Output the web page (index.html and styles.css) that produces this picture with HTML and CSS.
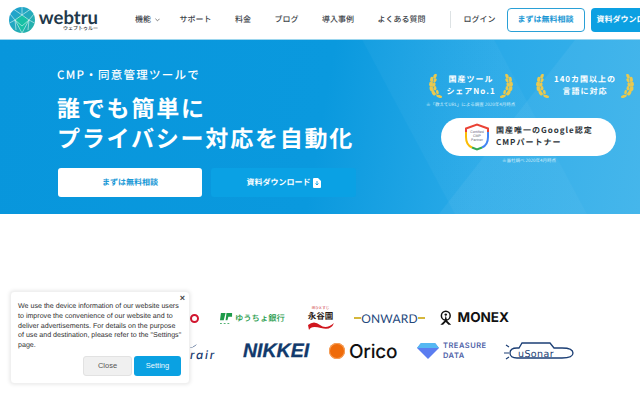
FILE: index.html
```html
<!DOCTYPE html>
<html lang="ja">
<head>
<meta charset="utf-8">
<title>webtru</title>
<link rel="stylesheet" href="styles.css">
</head>
<body>
<header class="site-header">
  <a class="brand">
    <svg class="brand-mark" viewBox="0 0 26 26">
      <defs><linearGradient id="gl" x1="0" y1="0" x2="1" y2="1"><stop offset="0" stop-color="#1f9fd6"/><stop offset="1" stop-color="#27b5a3"/></linearGradient></defs>
      <circle cx="13" cy="13" r="13" fill="url(#gl)"/>
      <path d="M13 26 6 13 13 8 20 13Z" fill="#18c0a5"/>
      <path d="M6 13 13 8 20 13 13 26 6 13ZM13 8V0M6 13 1 7M20 13 25 7M6 13 .5 16M20 13 25.500 16M13 8 5 2.500M13 8 21 2.500M6 13 13 19 20 13M6 13 7 23M20 13 19 23" fill="none" stroke="#dff6f6" stroke-width=".6"/>
    </svg>
    <span class="brand-text">
      <span class="brand-name">webtru</span>
      <span class="brand-sub">ウェブトゥルー</span>
    </span>
  </a>
  <nav class="nav">
    <a class="nav-item nav-drop">機能<svg class="chev" viewBox="0 0 6 4"><path d="M.5.5 3 3 5.500.5" fill="none" stroke="#555" stroke-width=".9"/></svg></a>
    <a class="nav-item">サポート</a>
    <a class="nav-item">料金</a>
    <a class="nav-item">ブログ</a>
    <a class="nav-item">導入事例</a>
    <a class="nav-item">よくある質問</a>
  </nav>
  <span class="nav-divider"></span>
  <a class="nav-item login">ログイン</a>
  <a class="head-btn head-outline">まずは無料相談</a>
  <a class="head-btn head-fill">資料ダウンロード</a>
</header>

<section class="hero">
  <div class="hero-left">
    <p class="hero-lead">CMP・同意管理ツールで</p>
    <h1 class="hero-title">誰でも簡単に<br>プライバシー対応を自動化</h1>
    <div class="hero-actions">
      <a class="cta cta-white">まずは無料相談</a>
      <a class="cta cta-blue">資料ダウンロード<svg class="doc" viewBox="0 0 8 10"><path d="M0 1Q0 0 1 0H5L8 3V9Q8 10 7 10H1Q0 10 0 9Z" fill="#fff"/><path d="M4 3V7M2.500 5.500 4 7 5.500 5.500" fill="none" stroke="#0a9fe2" stroke-width=".9"/></svg></a>
    </div>
  </div>
  <div class="hero-right">
    <div class="awards">
      <div class="award">
        <svg class="laurel" viewBox="0 0 16 26"><use href="#laurel-shape"/></svg>
        <span class="award-text">国産ツール<br>シェアNo.1</span>
        <svg class="laurel flip" viewBox="0 0 16 26"><use href="#laurel-shape"/></svg>
      </div>
      <div class="award">
        <svg class="laurel" viewBox="0 0 16 26"><use href="#laurel-shape"/></svg>
        <span class="award-text">140カ国以上の<br>言語に対応</span>
        <svg class="laurel flip" viewBox="0 0 16 26"><use href="#laurel-shape"/></svg>
      </div>
    </div>
    <p class="note note-one">※「教えてURL」による調査 2020年4月時点</p>
    <div class="partner">
      <svg class="shield" viewBox="0 0 26 28">
        <path d="M13 1.500 24 5.500V14Q24 22 13 26.500Q2 22 2 14V5.500Z" fill="#fff"/>
        <path d="M24 9V14Q24 22 18 24.500" fill="none" stroke="#4285f4" stroke-width="2"/>
        <path d="M18 24.500 13 26.500 8 24.500" fill="none" stroke="#34a853" stroke-width="2"/>
        <path d="M8 24.500Q2 22 2 14V9" fill="none" stroke="#fbbc05" stroke-width="2"/>
        <path d="M2 9V5.500L13 1.500 24 5.500V9" fill="none" stroke="#ea4335" stroke-width="2"/>
        <text class="shield-text" x="13" y="10">Certified</text>
        <text class="shield-text" x="13" y="14">CMP</text>
        <text class="shield-text" x="13" y="18">Partner</text>
      </svg>
      <span class="partner-text">国産唯一のGoogle認定<br>CMPパートナー</span>
    </div>
    <p class="note">※当社調べ 2020年4月時点</p>
  </div>
</section>

<section class="logos">
  <div class="logo-row row-a">
    <div class="logo logo-red"><span class="red-ring"></span></div>
    <div class="logo logo-post">
      <svg class="jp" viewBox="0 0 14 14"><path d="M1 1H6L4 9H0ZM7 1H13V5H9L8 9H6Z" fill="#1d9a48"/><path d="M0 12H2V13H0ZM4 12H6V13H4ZM8 12H10V13H8Z" fill="#1d9a48"/></svg>
      <span>ゆうちょ銀行</span>
    </div>
    <div class="logo logo-eikoku">
      <span class="eik-top">味ひとすじ</span>
      <span class="eik-name">永谷園</span>
      <svg class="eik-wave" viewBox="0 0 26 8"><path d="M0 3Q6 -2 12 3T26 1Q23 9 13 6T1 8Z" fill="#d0161e"/></svg>
    </div>
    <div class="logo logo-onward"><i class="dash"></i><span>ONWARD</span><i class="dash"></i></div>
    <div class="logo logo-monex">
      <svg class="monex-mark" viewBox="0 0 20 22"><circle cx="10" cy="7.500" r="6.500" fill="none" stroke="#111" stroke-width="2.200"/><circle cx="10" cy="6" r="1.800" fill="#111"/><path d="M10 7 8 15 2 21H6L10 17 14 21H18L12 15Z" fill="#111"/></svg>
      <span>MONEX</span>
    </div>
  </div>
  <div class="logo-row row-b">
    <div class="logo logo-air">
      <svg class="swoosh" viewBox="0 0 8 4"><path d="M0 4Q4 3.500 8 0 5 4 0 4Z" fill="#17386e"/></svg>
      <span>rair</span>
    </div>
    <div class="logo logo-nikkei">NIKKEI</div>
    <div class="logo logo-orico"><span class="orico-dot"></span><span>Orico</span></div>
    <div class="logo logo-treasure">
      <svg class="gem" viewBox="0 0 22 16"><path d="M4 0H18L22 5 11 16 0 5Z" fill="#5b7df0"/><path d="M4 0H18L22 5H0Z" fill="#55b8f2"/></svg>
      <span>TREASURE<br>DATA</span>
    </div>
    <div class="logo logo-usonar">
      <svg class="sonar" viewBox="0 0 70 18">
        <path d="M5 5 2 3M5 11H0M5 15 2 17" stroke="#1c3f75" stroke-width="1.200" fill="none"/>
        <path d="M6 11Q6 6 13 6H15L18 1H46L50 6H58Q69 6 69 11T58 16H13Q6 16 6 11Z" fill="#fff" stroke="#1c3f75" stroke-width="1.300"/>
        <text class="sonar-text" x="14" y="14.500">uSonar</text>
      </svg>
    </div>
  </div>
</section>

<aside class="cookie">
  <button class="cookie-x">×</button>
  <p class="cookie-text">We use the device information of our website users to improve the convenience of our website and to deliver advertisements. For details on the purpose of use and destination, please refer to the "Settings" page.</p>
  <div class="cookie-actions">
    <button class="ck-btn ck-close">Close</button>
    <button class="ck-btn ck-set">Setting</button>
  </div>
</aside>

<svg class="defs" width="0" height="0">
  <symbol id="laurel-shape" viewBox="0 0 16 26">
    <path d="M13 25Q3 21 5 8" fill="none" stroke="#e9c94f" stroke-width="1"/>
    <g fill="#e9c94f">
      <ellipse cx="7.500" cy="2.500" rx="1.700" ry="2.800" transform="rotate(25 7.500 2.500)"/>
      <ellipse cx="4" cy="6" rx="1.800" ry="2.800" transform="rotate(10 4 6)"/>
      <ellipse cx="7.500" cy="7" rx="1.500" ry="2.400" transform="rotate(30 7.500 7)"/>
      <ellipse cx="3" cy="11" rx="1.800" ry="2.800"/>
      <ellipse cx="6.500" cy="11.500" rx="1.500" ry="2.400" transform="rotate(15 6.500 11.500)"/>
      <ellipse cx="3.500" cy="16" rx="1.800" ry="2.800" transform="rotate(-15 3.500 16)"/>
      <ellipse cx="7.500" cy="15.500" rx="1.500" ry="2.400"/>
      <ellipse cx="6" cy="20.500" rx="1.800" ry="2.900" transform="rotate(-35 6 20.500)"/>
      <ellipse cx="10" cy="19.500" rx="1.400" ry="2.400" transform="rotate(-15 10 19.500)"/>
      <ellipse cx="12" cy="24" rx="3.200" ry="1.500" transform="rotate(15 12 24)"/>
    </g>
  </symbol>
</svg>
</body>
</html>
```
FILE: styles.css
```css
* { box-sizing: border-box; }
html, body { margin: 0; padding: 0; }
body {
  position: relative;
  width: 640px;
  height: 400px;
  overflow: hidden;
  background: #fff;
  font-family: "Noto Sans CJK JP", "Noto Sans", sans-serif;
  color: #3b4248;
  text-rendering: geometricPrecision;
}
p, h1 { margin: 0; }

/* header */
.site-header {
  display: flex;
  align-items: center;
  height: 40px;
  padding-left: 9px;
  background: #fff;
  border-bottom: 1px solid #9cd6ee;
  white-space: nowrap;
  overflow: hidden;
}
.brand { display: flex; align-items: center; gap: 3px; width: 126px; flex: none; }
.brand-mark { width: 26px; height: 26px; flex: none; }
.brand-text { display: flex; flex-direction: column; align-items: flex-end; width: 60px; }
.brand-name {
  font-family: Lato, sans-serif;
  font-weight: 700;
  font-size: 18.500px;
  line-height: 18px;
  color: #22384a;
}
.brand-sub { font-size: 5px; line-height: 6px; font-weight: 500; color: #333; }
.nav { display: flex; align-items: center; gap: 23.500px; flex: none; }
.nav-item { font-size: 8px; font-weight: 500; color: #3d444a; }
.nav-drop { display: flex; align-items: center; gap: 4px; margin-right: -4px; }
.chev { width: 5px; height: 4px; }
.nav-divider { width: 1px; height: 17px; background: #dde2e4; margin: 0 13px 0 24px; flex: none; }
.login { margin-right: 11px; flex: none; }
.head-btn {
  display: flex;
  align-items: center;
  justify-content: center;
  height: 24px;
  border-radius: 4px;
  font-size: 8px;
  font-weight: 700;
  flex: none;
}
.head-outline { width: 78px; border: 1px solid #2aa0d6; color: #1a97d4; background: #fff; margin-right: 6px; }
.head-fill { width: 50px; background: #0ca0e2; color: #fff; justify-content: flex-start; padding-left: 6px; overflow: hidden; border-radius: 4px 0 0 4px; }

/* hero */
.hero {
  display: flex;
  height: 174px;
  padding-left: 57px;
  color: #fff;
  background:
    linear-gradient(128deg, rgba(255,255,255,0) 74%, rgba(255,255,255,.05) 74.200%),
    linear-gradient(62deg, rgba(255,255,255,0) 62%, rgba(255,255,255,.03) 62.200%, rgba(255,255,255,.03) 80%, rgba(255,255,255,0) 80.200%),
    linear-gradient(100deg, #0896dc 0%, #0a99de 50%, #2aaae8 75%, #3bb2ea 100%);
}
.hero-left { width: 361px; flex: none; padding-top: 27px; }
.hero-lead { font-size: 11.500px; line-height: 16px; font-weight: 500; letter-spacing: 1.250px; white-space: nowrap; }
.hero-title { margin-top: 9px; font-size: 23px; line-height: 30px; font-weight: 700; letter-spacing: 1.800px; white-space: nowrap; }
.hero-actions { display: flex; gap: 9px; margin-top: 16px; margin-left: 1px; }
.cta {
  display: flex;
  align-items: center;
  justify-content: center;
  width: 144px;
  height: 29px;
  border-radius: 3px;
  font-size: 8px;
  font-weight: 700;
}
.cta-white { background: #fff; color: #1898d6; }
.cta-blue { width: 145px; background: #0aa1e4; color: #fff; gap: 2px; }
.doc { width: 8px; height: 10px; }

.hero-right { display: flex; flex-direction: column; align-items: flex-start; width: 222px; flex: none; padding-top: 33px; }
.awards { display: flex; gap: 21px; margin-left: 10px; }
.award { display: flex; align-items: center; justify-content: space-between; width: 86px; }
.award + .award { width: 100px; }
.laurel { width: 15px; height: 26px; flex: none; }
.flip { transform: scaleX(-1); }
.award-text {
  font-size: 8px;
  line-height: 12px;
  font-weight: 700;
  letter-spacing: 1px;
  text-align: center;
  white-space: nowrap;
}
.note { font-size: 4.500px; line-height: 6px; color: #d8f0fb; width: 222px; text-align: center; white-space: nowrap; }
.note-one { margin: 3px 0 10px 8px; width: auto; }
.partner {
  display: flex;
  align-items: center;
  gap: 6px;
  width: 175px;
  height: 38px;
  margin-left: 23px;
  padding-left: 23px;
  background: #fff;
  border-radius: 19px;
  margin-bottom: 2px;
}
.shield { width: 26px; height: 28px; flex: none; }
.shield-text { font-size: 3.600px; fill: #667; text-anchor: middle; font-family: "Liberation Sans", sans-serif; }
.partner-text { font-size: 8px; line-height: 12px; font-weight: 700; letter-spacing: 1px; color: #2c3338; white-space: nowrap; }

/* logos */
.logos { display: flex; flex-direction: column; gap: 8px; padding-top: 91px; }
.logo-row { display: flex; align-items: center; }
.row-a { height: 26px; padding-left: 130px; gap: 21px; }
.row-b { height: 24px; padding-left: 120px; gap: 20px; }
.logo { display: flex; align-items: center; flex: none; white-space: nowrap; }
.logo-red { width: 69px; justify-content: flex-end; }
.red-ring { width: 9px; height: 9px; border: 2.500px solid #d2152f; border-radius: 50%; }
.logo-post { width: 66px; gap: 2px; font-size: 8.300px; font-weight: 500; color: #1d9a48; }
.jp { width: 13px; height: 13px; }
.logo-eikoku { flex-direction: column; width: 27px; color: #2a1a16; }
.eik-top { font-size: 3.500px; line-height: 5px; color: #c8161e; }
.eik-name { font-size: 8.500px; line-height: 11px; font-weight: 700; }
.eik-wave { width: 26px; height: 8px; }
.logo-onward {
  width: 71px;
  margin-left: -1px;
  font-family: Lato, sans-serif;
  font-size: 12px;
  color: #24477c;
  letter-spacing: .2px;
}
.dash { display: block; width: 6px; height: 1.500px; background: #d5b73c; flex: auto; }
.logo-monex {
  width: 70px;
  margin-left: -7px;
  gap: 5px;
  font-family: Inter, sans-serif;
  font-weight: 700;
  font-size: 13.500px;
  color: #111;
}
.monex-mark { width: 19px; height: 22px; }
.logo-air {
  position: relative;
  width: 96px;
  justify-content: flex-end;
  margin-right: 7px;
  padding-top: 7px;
  font-family: Inter, sans-serif;
  font-style: italic;
  font-size: 11.500px;
  font-weight: 500;
  letter-spacing: 1.800px;
  color: #17386e;
}
.swoosh { position: absolute; right: 19px; top: 3px; width: 8px; height: 4px; }
.logo-nikkei {
  width: 66px;
  font-family: "Liberation Sans", sans-serif;
  font-style: italic;
  font-weight: 700;
  font-size: 19.500px;
  color: #123a6c;
  -webkit-text-stroke: .3px #123a6c;
}
.logo-orico { width: 68px; gap: 4px; font-family: Inter, sans-serif; font-weight: 500; font-size: 19px; letter-spacing: -.2px; color: #111; }
.orico-dot { width: 16px; height: 16px; border-radius: 50%; background: #ef6b0a; box-shadow: inset 0 0 0 1px #f6a15c; flex: none; }
.logo-treasure {
  width: 70px;
  gap: 4px;
  font-family: Inter, sans-serif;
  font-size: 7.500px;
  line-height: 10px;
  font-weight: 600;
  letter-spacing: .5px;
  color: #4f62a8;
}
.gem { width: 22px; height: 16px; flex: none; }
.logo-usonar { width: 70px; margin-left: -3px; }
.sonar { width: 70px; height: 18px; }
.sonar-text { font-family: "DejaVu Sans", sans-serif; font-size: 9.500px; fill: #1c3f75; letter-spacing: .4px; }
.defs { position: absolute; }

/* cookie dialog */
.cookie {
  position: absolute;
  left: 10px;
  top: 291px;
  width: 180px;
  height: 93px;
  padding: 10px 7px 0;
  background: #fff;
  border: 1px solid #f0f0f0;
  border-radius: 4px;
  box-shadow: 0 0 4px rgba(0,0,0,.12);
  font-family: "Liberation Sans", Arial, sans-serif;
}
.cookie-x {
  position: absolute;
  right: 2px;
  top: 1px;
  padding: 0 2px;
  border: 0;
  background: none;
  font-family: "Liberation Sans", sans-serif;
  font-size: 9px;
  line-height: 10px;
  font-weight: 700;
  color: #444;
}
.cookie-text { font-size: 7.100px; line-height: 9.800px; color: #2f2f2f; }
.cookie-actions { display: flex; justify-content: flex-end; gap: 2px; margin-top: 5px; padding-right: 1px; }
.ck-btn {
  height: 20px;
  padding: 0;
  border-radius: 3px;
  font-family: "Liberation Sans", sans-serif;
  font-size: 7.500px;
}
.ck-close { width: 49px; background: #f0f0f0; border: 1px solid #e2e2e2; color: #555; }
.ck-set { width: 47px; background: #0aa1e2; border: 0; color: #eef9fe; }
```
